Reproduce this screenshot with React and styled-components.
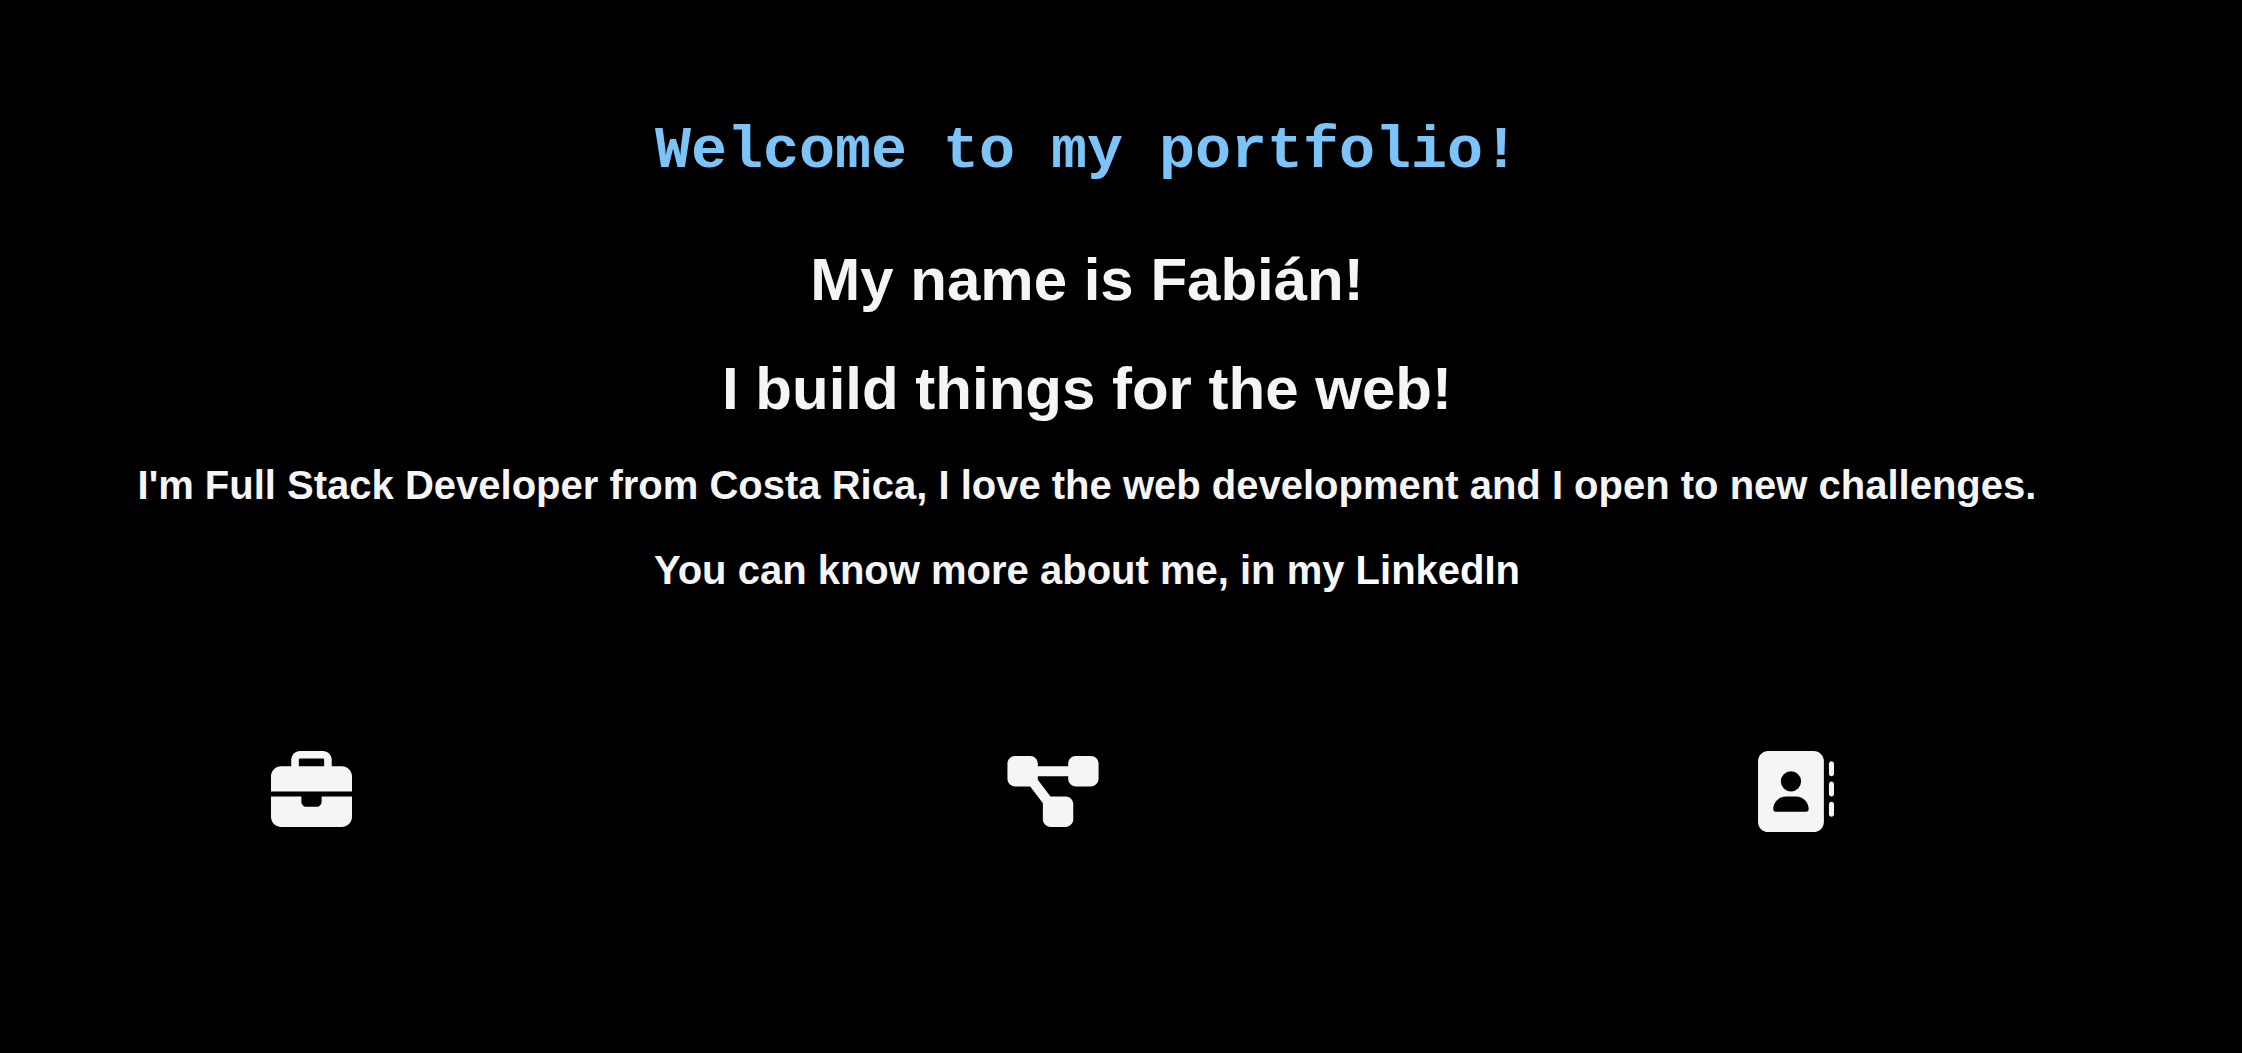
import React from "react";
import styled, { createGlobalStyle } from "styled-components";
import { FaBriefcase, FaDiagramProject, FaAddressBook } from "react-icons/fa6";

const GlobalStyle = createGlobalStyle`
  body {
    margin: 0;
    background: #000;
    color: #f5f5f5;
    font-family: Arial, "Liberation Sans", sans-serif;
  }
`;

const Page = styled.main`
  box-sizing: border-box;
  min-height: 100vh;
  padding: 117px 68px 60px 0;
  text-align: center;
`;

const Title = styled.h1`
  margin: 0 0 60px;
  color: #7cc4f8;
  font: bold 60px/68px "Courier New", Courier, "Liberation Mono", monospace;
`;

const Headline = styled.h2`
  margin: 0 0 40px;
  font-size: 60px;
  line-height: 69px;
`;

const Intro = styled.p`
  margin: 0 0 40px;
  font-size: 40px;
  font-weight: bold;
  line-height: 45px;
`;

const TextLink = styled.a`
  color: #fff;
  text-decoration: none;
`;

const Nav = styled.nav`
  display: flex;
  justify-content: space-between;
  margin-top: 158px;
  padding: 0 340px 0 271px;
`;

const IconLink = styled.a`
  display: block;
  color: #f5f5f5;

  svg {
    display: block;
    width: ${({ $wide }) => ($wide ? "92px" : "81px")};
    height: 81px;
  }
`;

const links = [
  { href: "#work", label: "Work", Icon: FaBriefcase },
  { href: "#projects", label: "Projects", Icon: FaDiagramProject, wide: true },
  { href: "#contact", label: "Contact", Icon: FaAddressBook },
];

export default function App() {
  return (
    <>
      <GlobalStyle />
      <Page>
        <Title>Welcome to my portfolio!</Title>
        <Headline>My name is Fabián!</Headline>
        <Headline>I build things for the web!</Headline>
        <Intro>
          I'm Full Stack Developer from Costa Rica, I love the web development
          and I open to new challenges.
        </Intro>
        <Intro>
          You can know more about me, in my{" "}
          <TextLink href="#linkedin">LinkedIn</TextLink>
        </Intro>
        <Nav>
          {links.map(({ href, label, Icon, wide }) => (
            <IconLink key={href} href={href} aria-label={label} $wide={wide}>
              <Icon />
            </IconLink>
          ))}
        </Nav>
      </Page>
    </>
  );
}
